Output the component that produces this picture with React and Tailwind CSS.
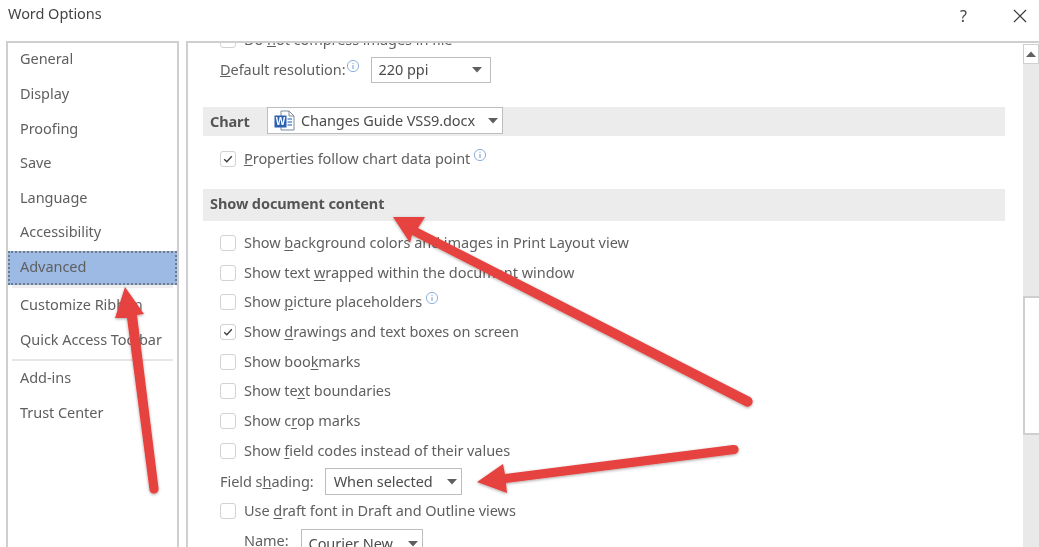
const sideTop = ['General', 'Display', 'Proofing', 'Save', 'Language', 'Accessibility']
const showRows = [
  { before: 'Show ', key: 'b', after: 'ackground colors and images in Print Layout view' },
  { before: 'Show text ', key: 'w', after: 'rapped within the document window' },
  { before: 'Show ', key: 'p', after: 'icture placeholders', info: true },
  { before: 'Show ', key: 'd', after: 'rawings and text boxes on screen', checked: true },
  { before: 'Show boo', key: 'k', after: 'marks' },
  { before: 'Show te', key: 'x', after: 't boundaries' },
  { before: 'Show c', key: 'r', after: 'op marks' },
  { before: 'Show ', key: 'f', after: 'ield codes instead of their values' },
]

function Info() {
  return (
    <svg width="14" height="14" viewBox="0 0 14 14" className="mb-2 shrink-0">
      <circle cx="7" cy="7" r="5.6" fill="none" stroke="#8db0dc" strokeWidth="1" />
      <path d="M7 6v4M7 3.8v1" stroke="#6d97cc" strokeWidth="1" />
    </svg>
  )
}

function Checkbox({ checked }) {
  return (
    <span className="flex h-[16px] w-[16px] shrink-0 items-center justify-center rounded-[3px] border border-[#d2d2d2] bg-white">
      {checked && (
        <svg width="10" height="10" viewBox="0 0 10 10">
          <path d="M1.2 5.2 3.8 7.8 8.8 2.2" fill="none" stroke="#3a3a3a" strokeWidth="1.3" />
        </svg>
      )}
    </span>
  )
}

function Caret() {
  return (
    <svg width="10" height="6" viewBox="0 0 10 6" className="shrink-0">
      <path d="M0 0h10L5 5.5z" fill="#5f5f5f" />
    </svg>
  )
}

function Select({ className, children }) {
  return (
    <div className={`flex items-center justify-between border border-[#bdbdbd] bg-white text-[#4c4c4c] ${className}`}>
      {children}
      <Caret />
    </div>
  )
}

function CheckRow({ before, keyLetter, after, checked, info }) {
  return (
    <div className="flex h-[29.7px] items-center pl-[32px]">
      <Checkbox checked={checked} />
      <span className="ml-[8px]">
        {before}
        <u className="decoration-1 underline-offset-2">{keyLetter}</u>
        {after}
      </span>
      {info && <span className="ml-[3px] flex"><Info /></span>}
    </div>
  )
}

function WordIcon() {
  return (
    <svg width="21" height="21" viewBox="0 0 21 21" className="shrink-0">
      <path d="M7 1H15l5 5v14H7z" fill="#fff" stroke="#7f8a98" />
      <path d="M15 1v5h5" fill="none" stroke="#7f8a98" />
      <path d="M13.5 9h4.5M13.5 12h4.5M13.5 15h4.5" stroke="#5f8fd0" strokeWidth="1.4" />
      <rect x="0.5" y="5.5" width="12" height="12" fill="#2b5fb0" />
      <text x="6.5" y="15" textAnchor="middle" fontSize="10" fontWeight="700" fill="#fff" fontFamily="Liberation Sans, sans-serif">W</text>
    </svg>
  )
}

function Arrows() {
  return (
    <svg width="1039" height="547" viewBox="0 0 1039 547" className="pointer-events-none absolute left-0 top-0">
      <defs>
        <filter id="arrowShadow" x="-10%" y="-10%" width="120%" height="120%">
          <feDropShadow dx="0" dy="1" stdDeviation="1.6" floodColor="#000" floodOpacity="0.35" />
        </filter>
      </defs>
      <g fill="#e5433f" filter="url(#arrowShadow)">
        <path d="M125 287 144 314 137 315 158.5 488a4.5 4.5 0 0 1-9 2L127 318 115 318z" />
        <path d="M393 217 425 217 418 228 750 397a5 5 0 0 1-5 9L412 235 410 243z" />
        <path d="M477 482 503 464 505 474 733 445a4.5 4.5 0 0 1 2 9L506 483 507 493z" />
      </g>
    </svg>
  )
}

export default function App() {
  return (
    <div className="relative h-[547px] w-[1039px] overflow-hidden bg-white font-['Noto_Sans',sans-serif] text-[14.5px] tracking-[-0.05px] text-[#5f5f5f] blur-[0.35px]">
      <div className="flex h-[41px] items-start justify-between pl-[8px] pr-[11px] pt-[3px]">
        <span className="text-[#444]">Word Options</span>
        <div className="flex items-center gap-[45px] pt-[1px]">
          <span className="text-[16px] text-[#444]">?</span>
          <svg width="16" height="16" viewBox="0 0 16 16">
            <path d="M2 2l12 12M14 2 2 14" stroke="#3c3c3c" strokeWidth="1.2" />
          </svg>
        </div>
      </div>

      <div className="flex h-[506px] pl-[6px]">
        <aside className="flex w-[173px] shrink-0 flex-col border-x-2 border-t-2 border-[#cfcfcf]">
          {sideTop.map((item) => (
            <div key={item} className="flex h-[34.6px] items-center pb-[2px] pl-[12px]">{item}</div>
          ))}
          <div className="flex h-[34px] items-center border-2 border-dotted border-[#6f7c8e] bg-[#9dbae4] pb-[1px] pl-[10px]">Advanced</div>
          <div className="mx-[4px] mb-[1px] h-[3px] bg-[#eeeeee]" />
          <div className="flex h-[34.5px] items-center pb-[2px] pl-[12px]">Customize Ribbon</div>
          <div className="flex h-[35px] items-center pb-[2px] pl-[12px]">Quick Access Toolbar</div>
          <div className="mx-[4px] my-[1px] h-[2px] bg-[#e6e6e6]" />
          <div className="flex h-[34.5px] items-center pb-[2px] pl-[12px]">Add-ins</div>
          <div className="flex h-[34.5px] items-center pb-[2px] pl-[12px]">Trust Center</div>
        </aside>

        <main className="ml-[7px] flex min-w-0 flex-1 overflow-hidden border-l-2 border-t-2 border-[#cfcfcf]">
          <div className="min-w-0 flex-1">
            <div className="-mt-[18px] flex h-[30px] items-center pl-[32px]">
              <Checkbox />
              <span className="ml-[8px]">Do <u>n</u>ot compress images in file</span>
            </div>
            <div className="mt-[-1px] flex h-[32px] items-center pl-[32px]">
              <span><u>D</u>efault resolution:</span>
              <span className="flex"><Info /></span>
              <Select className="ml-[11px] h-[26px] w-[120px] pl-[7px] pr-[8px]">220 ppi</Select>
            </div>
            <div className="ml-[15px] mr-[18px] mt-[21px] flex h-[29px] items-center bg-[#ececec] pl-[7px] font-bold tracking-[-0.1px] text-[#555]">
              <span className="w-[57px] pt-[1px]">Chart</span>
              <Select className="h-[27px] w-[236px] self-start pl-[6px] pr-[4px] font-normal">
                <span className="flex items-center gap-[6px]"><WordIcon /><span className="pt-[1px]">Changes Guide VSS9.docx</span></span>
              </Select>
            </div>
            <div className="mt-[8px] flex h-[30px] items-center pl-[32px]">
              <Checkbox checked />
              <span className="ml-[8px]"><u>P</u>roperties follow chart data point</span>
              <span className="ml-[3px] flex"><Info /></span>
            </div>
            <div className="ml-[15px] mr-[18px] mt-[15px] flex h-[32px] items-center bg-[#ececec] pb-[2px] pl-[7px] font-bold tracking-[-0.1px] text-[#555]">
              Show document content
            </div>
            <div className="mt-[7px]">
              {showRows.map((row) => (
                <CheckRow key={row.before + row.key} before={row.before} keyLetter={row.key} after={row.after} checked={row.checked} info={row.info} />
              ))}
              <div className="flex h-[31px] items-center pl-[32px] pt-[1px]">
                <span>Field s<u>h</u>ading:</span>
                <Select className="ml-[11px] h-[27px] w-[137px] pl-[8px] pr-[4px]">When selected</Select>
              </div>
              <CheckRow before="Use " keyLetter="d" after="raft font in Draft and Outline views" />
              <div className="flex h-[30px] items-start pl-[56px] pt-[3px]">
                <span className="mt-[1px]">Name:</span>
                <Select className="ml-[12px] h-[30px] w-[122px] pl-[7px] pr-[4px]">Courier New</Select>
              </div>
            </div>
          </div>

          <div className="mt-[1px] flex w-[16px] shrink-0 flex-col bg-[#e9e9e9]">
            <div className="flex h-[20px] items-center justify-center border border-[#cfcfcf] bg-white">
              <svg width="10" height="6" viewBox="0 0 10 6"><path d="M0 6h10L5 .5z" fill="#606060" /></svg>
            </div>
            <div className="mt-[232px] h-[139px] border-y-2 border-l-2 border-[#cfcfcf] bg-white" />
          </div>
        </main>
      </div>

      <Arrows />
    </div>
  )
}
